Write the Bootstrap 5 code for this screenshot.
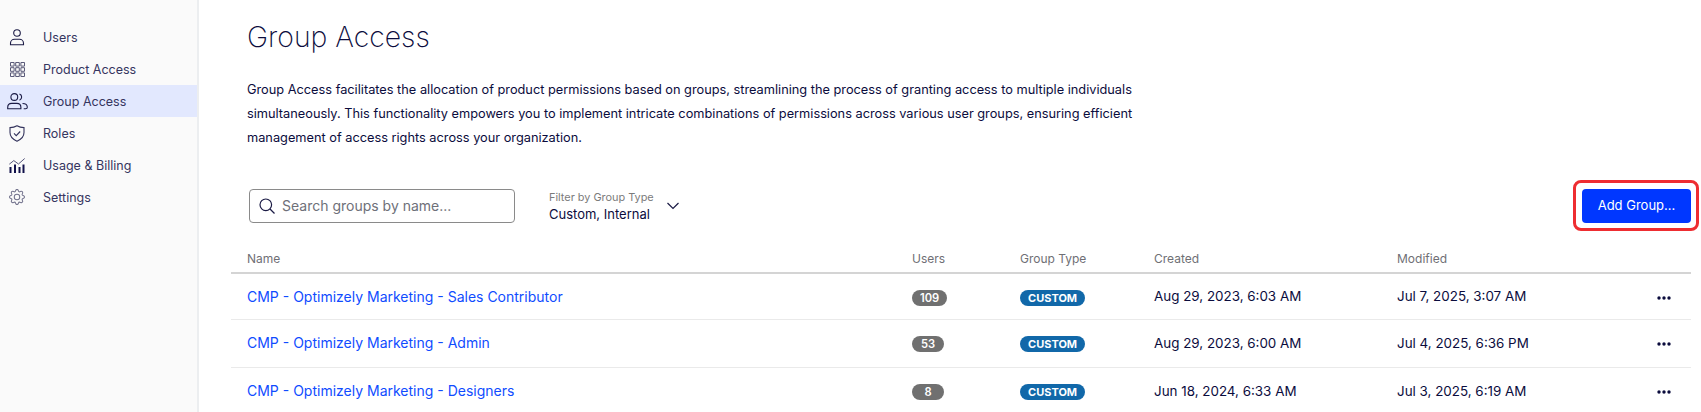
<!doctype html>
<html lang="en"><head><meta charset="utf-8"><title>Group Access</title>
<link href="https://cdn.jsdelivr.net/npm/bootstrap@5.3.0/dist/css/bootstrap.min.css" rel="stylesheet">
<style>
html,body{height:412px;overflow:hidden}
body{font-family:Inter,"Liberation Sans",sans-serif;color:#0b0c3d;background:#fff;font-size:13px}
.side-rail{width:199px;height:412px;background:#fafafa;border-right:2px solid #eceef0;padding-top:21px;flex:none}
.rail-item{height:32px;color:#35355f;font-size:12.5px;text-decoration:none}
.rail-item.is-on{background:#e2e8fe}
.rail-ico{width:34px;display:flex;justify-content:center;margin-right:9px}
.rail-ico svg{display:block}
.rail-lbl{padding-top:2px}
.main-pane{padding:0 10px 0 32px;min-width:0}
.page-ttl{font-weight:200;font-size:28.4px;line-height:36px;margin:19px 0 0 16px;color:#0b0c3d}
.page-desc{width:910px;margin:23px 0 0 16px;font-size:12.78px;line-height:24px;color:#0b0c3d}
.tool-row{margin:39px 0 0 18px;height:34px}
.search-wrap{width:266px;height:34px;border:1px solid #8a8a8a;border-radius:4px;padding-left:9px}
.search-wrap input{border:0;outline:0;background:none;padding:0 0 1px;margin-left:7px;font-size:14px;width:220px;color:#0b0c3d}
.search-wrap input::placeholder{color:#6e7079;opacity:1}
.filter-box{margin-left:34px}
.filter-txt{padding-top:2px}
.filter-lbl{font-size:10.9px;line-height:14px;color:#7b7b7b}
.filter-val{font-size:13px;line-height:20px}
.filter-chev{margin-left:12px}
.add-ring{position:absolute;right:2px;top:180px;width:126px;height:51px;border:3px solid #ee2d31;border-radius:8px;pointer-events:none}
.add-btn{background:#0037ff;border:0;color:#fff;width:109px;height:34px;font-size:13px;border-radius:4px;padding:0}
.grp-table{margin:23px 0 0;table-layout:fixed;width:1460px;--bs-table-color:#0b0c3d}
.grp-table th{font-weight:400;font-size:12px;color:#6f6f75;height:27px;padding:0;vertical-align:middle;border-bottom:2px solid #d4d4d4}
.grp-table td{height:48px;padding:0;vertical-align:middle;border-bottom:1px solid #eaeaea;font-size:13.4px}
.grp-table tbody tr:first-child td{height:46px}
.grp-table a{color:#0f4cff;text-decoration:none;font-size:14px}
.col-a{padding-left:16px!important}
.pill-n{display:inline-block;background:#707070;color:#fff;font-size:11.2px;font-weight:600;border-radius:9px;height:16px;line-height:16px;padding:0 8px;min-width:32px;text-align:center;vertical-align:middle}
.pill-t{display:inline-block;background:#1168a9;color:#fff;font-size:11px;font-weight:700;border-radius:9px;height:16px;line-height:16px;padding:0 8px;vertical-align:middle}
.dots-cell{text-align:right;padding-right:20px!important}
.dots-cell svg{display:inline-block;vertical-align:middle}
</style></head><body>
<div class="d-flex position-relative">
<nav class="side-rail">
<a class="rail-item d-flex align-items-center" href="#"><span class="rail-ico"><svg width="16" height="17" viewBox="0 0 16 17" fill="none" stroke="#1b1b45" stroke-width="1.1"><circle cx="8" cy="4" r="3.300"/><path d="M1.500 15.700v-1.500c0-2.400 1.900-4 4-4h5c2.100 0 4 1.600 4 4v1.500z"/></svg></span><span class="rail-lbl">Users</span></a>
<a class="rail-item d-flex align-items-center" href="#"><span class="rail-ico"><svg width="15" height="15" viewBox="0 0 15 15" fill="none" stroke="#5a5a78" stroke-width="1"><path d="M.5.5h3.600v3.600H.5zM5.700.5h3.600v3.600H5.700zM10.900.5h3.600v3.600h-3.600zM.5 5.700h3.600v3.600H.5zM5.700 5.700h3.600v3.600H5.700zM10.900 5.700h3.600v3.600h-3.600zM.5 10.900h3.600v3.600H.5zM5.700 10.900h3.600v3.600H5.700zM10.900 10.900h3.600v3.600h-3.600z"/></svg></span><span class="rail-lbl">Product Access</span></a>
<a class="rail-item is-on d-flex align-items-center" href="#"><span class="rail-ico"><svg width="21" height="17" viewBox="0 0 21 17" fill="none" stroke="#1b1b45" stroke-width="1.1"><circle cx="7.300" cy="4" r="3.400"/><path d="M.7 15.700v-1.300c0-2.400 1.800-4 4-4h5.200c2.200 0 4 1.600 4 4v1.300z"/><path d="M12.500 1a3.300 3.300 0 0 1 0 6.200M15.500 10.500c2.600 0 4.800 1.300 4.800 3.700 0 1-.6 1.500-1.600 1.500h-2"/></svg></span><span class="rail-lbl">Group Access</span></a>
<a class="rail-item d-flex align-items-center" href="#"><span class="rail-ico"><svg width="16" height="17" viewBox="0 0 16 17" fill="none" stroke="#33335c" stroke-width="1.100"><path d="M8 .8c2 1.200 4.500 1.800 7 1.800v5c0 4-3 7-7 8.600-4-1.600-7-4.600-7-8.600v-5c2.500 0 5-.6 7-1.800z"/><path d="M5 8.400l2.200 2.200L11.200 6.500"/></svg></span><span class="rail-lbl">Roles</span></a>
<a class="rail-item d-flex align-items-center" href="#"><span class="rail-ico"><svg width="16" height="15" viewBox="0 0 16 15" fill="#10104a"><path d="M1 9h2v6H1zM5.500 6.500h2V15h-2zM10 9h2v6h-2zM14 6.500h2V15h-2z" transform="translate(-.5 0)"/><path d="M.3 6.200L4.800 2.600 9.500 6 15.700.5" fill="none" stroke="#55557a" stroke-width="1"/></svg></span><span class="rail-lbl">Usage &amp; Billing</span></a>
<a class="rail-item d-flex align-items-center" href="#"><span class="rail-ico"><svg width="16" height="16" viewBox="0 0 16 16" fill="#72728c"><path d="M8 4.754a3.246 3.246 0 1 0 0 6.492 3.246 3.246 0 0 0 0-6.492zM5.754 8a2.246 2.246 0 1 1 4.492 0 2.246 2.246 0 0 1-4.492 0z"/><path d="M9.796 1.343c-.527-1.790-3.065-1.790-3.592 0l-.094.319a.873.873 0 0 1-1.255.52l-.292-.16c-1.640-.892-3.433.902-2.540 2.541l.159.292a.873.873 0 0 1-.52 1.255l-.319.094c-1.790.527-1.790 3.065 0 3.592l.319.094a.873.873 0 0 1 .52 1.255l-.16.292c-.892 1.640.901 3.434 2.541 2.540l.292-.159a.873.873 0 0 1 1.255.52l.094.319c.527 1.790 3.065 1.790 3.592 0l.094-.319a.873.873 0 0 1 1.255-.52l.292.16c1.640.893 3.434-.902 2.540-2.541l-.159-.292a.873.873 0 0 1 .52-1.255l.319-.094c1.790-.527 1.790-3.065 0-3.592l-.319-.094a.873.873 0 0 1-.52-1.255l.16-.292c.893-1.640-.902-3.433-2.541-2.540l-.292.159a.873.873 0 0 1-1.255-.52l-.094-.319zm-2.633.283c.246-.835 1.428-.835 1.674 0l.094.319a1.873 1.873 0 0 0 2.693 1.115l.291-.16c.764-.415 1.600.42 1.184 1.185l-.159.292a1.873 1.873 0 0 0 1.116 2.692l.318.094c.835.246.835 1.428 0 1.674l-.319.094a1.873 1.873 0 0 0-1.115 2.693l.16.291c.415.764-.42 1.600-1.185 1.184l-.291-.159a1.873 1.873 0 0 0-2.693 1.116l-.094.318c-.246.835-1.428.835-1.674 0l-.094-.319a1.873 1.873 0 0 0-2.692-1.115l-.292.16c-.764.415-1.600-.42-1.184-1.185l.159-.291A1.873 1.873 0 0 0 1.945 8.930l-.319-.094c-.835-.246-.835-1.428 0-1.674l.319-.094A1.873 1.873 0 0 0 3.060 4.377l-.16-.292c-.415-.764.42-1.600 1.185-1.184l.292.159a1.873 1.873 0 0 0 2.692-1.115l.094-.319z"/></svg></span><span class="rail-lbl">Settings</span></a>
</nav>
<main class="main-pane flex-grow-1">
<h1 class="page-ttl">Group Access</h1>
<p class="page-desc">Group Access facilitates the allocation of product permissions based on groups, streamlining the process of granting access to multiple individuals simultaneously. This functionality empowers you to implement intricate combinations of permissions across various user groups, ensuring efficient management of access rights across your organization.</p>
<div class="tool-row d-flex align-items-center">
<div class="search-wrap d-flex align-items-center"><svg width="16" height="16" viewBox="0 0 16 16" fill="none" stroke="#1b1b45" stroke-width="1.200"><circle cx="6.800" cy="6.800" r="5.800"/><path d="M11 11l4.500 4.500"/></svg><input type="text" placeholder="Search groups by name..." aria-label="Search"></div>
<div class="filter-box d-flex align-items-center"><div class="filter-txt"><div class="filter-lbl">Filter by Group Type</div><div class="filter-val">Custom, Internal</div></div><svg class="filter-chev" width="14" height="8" viewBox="0 0 14 8" fill="none" stroke="#1b1b45" stroke-width="1.200"><path d="M1.500 1l5.500 5.500L12.500 1"/></svg></div>
<div class="ms-auto"><button class="add-btn" type="button">Add Group...</button></div>
</div>
<div class="add-ring"></div>
<table class="table grp-table">
<colgroup><col style="width:681px"><col style="width:108px"><col style="width:134px"><col style="width:243px"><col style="width:220px"><col></colgroup>
<thead><tr><th class="col-a">Name</th><th>Users</th><th>Group Type</th><th>Created</th><th>Modified</th><th></th></tr></thead>
<tbody>
<tr><td class="col-a"><a href="#">CMP - Optimizely Marketing - Sales Contributor</a></td><td><span class="pill-n">109</span></td><td><span class="pill-t">CUSTOM</span></td><td>Aug 29, 2023, 6:03 AM</td><td>Jul 7, 2025, 3:07 AM</td><td class="dots-cell"><svg width="14" height="4" viewBox="0 0 14 4" fill="#0b0c3d"><circle cx="2" cy="2" r="1.700"/><circle cx="7" cy="2" r="1.700"/><circle cx="12" cy="2" r="1.700"/></svg></td></tr>
<tr><td class="col-a"><a href="#">CMP - Optimizely Marketing - Admin</a></td><td><span class="pill-n">53</span></td><td><span class="pill-t">CUSTOM</span></td><td>Aug 29, 2023, 6:00 AM</td><td>Jul 4, 2025, 6:36 PM</td><td class="dots-cell"><svg width="14" height="4" viewBox="0 0 14 4" fill="#0b0c3d"><circle cx="2" cy="2" r="1.700"/><circle cx="7" cy="2" r="1.700"/><circle cx="12" cy="2" r="1.700"/></svg></td></tr>
<tr><td class="col-a"><a href="#">CMP - Optimizely Marketing - Designers</a></td><td><span class="pill-n">8</span></td><td><span class="pill-t">CUSTOM</span></td><td>Jun 18, 2024, 6:33 AM</td><td>Jul 3, 2025, 6:19 AM</td><td class="dots-cell"><svg width="14" height="4" viewBox="0 0 14 4" fill="#0b0c3d"><circle cx="2" cy="2" r="1.700"/><circle cx="7" cy="2" r="1.700"/><circle cx="12" cy="2" r="1.700"/></svg></td></tr>
</tbody></table>
</main></div>
<script src="https://cdn.jsdelivr.net/npm/bootstrap@5.3.0/dist/js/bootstrap.bundle.min.js"></script>
</body></html>
